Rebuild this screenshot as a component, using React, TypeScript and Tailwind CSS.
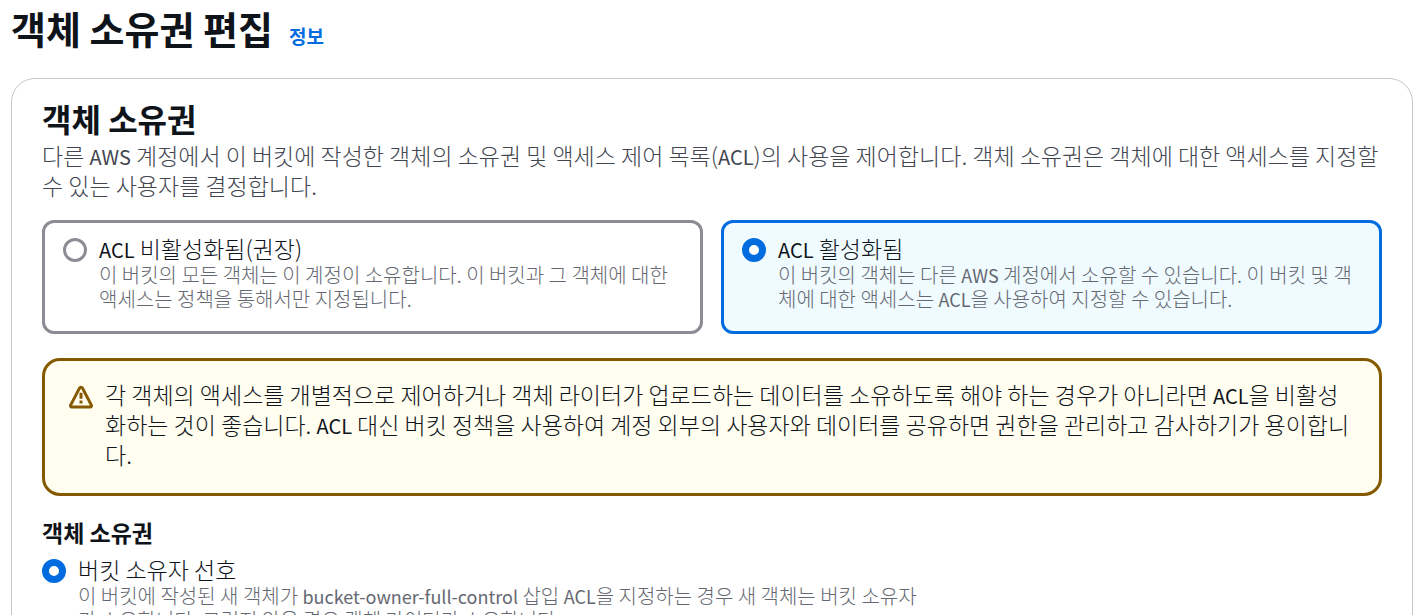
import React, { useState } from 'react';

const RADIO_CLASS =
  'mt-[5px] h-6 w-6 shrink-0 appearance-none rounded-full border-3 border-[#8c8c94] bg-white checked:border-[7px] checked:border-[#006ce0]';

const aclOptions = [
  {
    value: 'disabled',
    label: 'ACL 비활성화됨(권장)',
    description:
      '이 버킷의 모든 객체는 이 계정이 소유합니다. 이 버킷과 그 객체에 대한 액세스는 정책을 통해서만 지정됩니다.',
  },
  {
    value: 'enabled',
    label: 'ACL 활성화됨',
    description:
      '이 버킷의 객체는 다른 AWS 계정에서 소유할 수 있습니다. 이 버킷 및 객체에 대한 액세스는 ACL을 사용하여 지정할 수 있습니다.',
  },
];

// Korean copy is light; Latin words inside it are regular and a little smaller.
const MixedText = ({ children, small = false }: { children: string; small?: boolean }) => (
  <>
    {children.split(/([A-Za-z-]+)/).map((part, i) =>
      i % 2 ? (
        <span key={i} className={small ? 'text-[18px] leading-none font-normal' : 'text-[20px] leading-none font-normal'}>
          {part}
        </span>
      ) : (
        part
      )
    )}
  </>
);

const WarningIcon = () => (
  <svg className="mt-1.5 h-6 w-6 shrink-0" viewBox="0 0 16 16" fill="none" stroke="#855900" strokeWidth="2">
    <path d="M8 5.2v4M8 10.4v2" />
    <path
      strokeLinejoin="round"
      d="M14.9 13.4 9 2.1a1.15 1.15 0 0 0-2 0L1.1 13.4c-.3.6.1 1.3.8 1.3h12.2c.7 0 1.1-.7.8-1.3Z"
    />
  </svg>
);

const App = () => {
  const [acl, setAcl] = useState('enabled');
  const [owner, setOwner] = useState('preferred');

  return (
    <main className="pt-px pr-[7px] pl-[11px] font-['Noto_Sans_CJK_KR',sans-serif] text-[23px] leading-[30px] text-[#0f141a]">
      <header className="mb-[23px] flex items-baseline gap-4">
        <h1 className="text-[38px] leading-[54px] font-bold">객체 소유권 편집</h1>
        <a href="#info" className="text-[19px] leading-6 font-bold text-[#006ce0]">
          정보
        </a>
      </header>

      <section className="rounded-3xl border border-[#c6c6cd] px-[30px] pt-[21px] pb-8">
        <h2 className="text-[32px] leading-9 font-bold">객체 소유권</h2>
        <p className="mt-1 font-light text-[#424650]">
          <MixedText>
            다른 AWS 계정에서 이 버킷에 작성한 객체의 소유권 및 액세스 제어 목록(ACL)의 사용을 제어합니다. 객체
            소유권은 객체에 대한 액세스를 지정할 수 있는 사용자를 결정합니다.
          </MixedText>
        </p>

        <div className="mt-5 grid grid-cols-2 gap-[18px]" role="radiogroup" aria-label="ACL">
          {aclOptions.map((option) => (
            <label
              key={option.value}
              className="flex gap-3 rounded-xl border-3 border-[#8c8c94] px-[18px] pt-2.5 pb-5 has-checked:border-[#006ce0] has-checked:bg-[#f0fbff]"
            >
              <input
                type="radio"
                name="acl"
                value={option.value}
                checked={acl === option.value}
                onChange={() => setAcl(option.value)}
                className={RADIO_CLASS}
              />
              <span className="font-light">
                <span className="block">
                  <MixedText>{option.label}</MixedText>
                </span>
                <span className="block text-[20px] leading-6 text-[#656871]">
                  <MixedText small>{option.description}</MixedText>
                </span>
              </span>
            </label>
          ))}
        </div>

        <div className="mt-6 flex gap-3 rounded-[18px] border-3 border-[#855900] bg-[#fffef0] px-6 pt-[18px] pb-6">
          <WarningIcon />
          <p className="font-light">
            <MixedText>
              각 객체의 액세스를 개별적으로 제어하거나 객체 라이터가 업로드하는 데이터를 소유하도록 해야 하는 경우가
              아니라면 ACL을 비활성화하는 것이 좋습니다. ACL 대신 버킷 정책을 사용하여 계정 외부의 사용자와 데이터를
              공유하면 권한을 관리하고 감사하기가 용이합니다.
            </MixedText>
          </p>
        </div>

        <fieldset className="mt-[21px]">
          <legend className="mb-[7px] font-bold">객체 소유권</legend>
          <label className="flex max-w-[880px] gap-3">
            <input
              type="radio"
              name="owner"
              value="preferred"
              checked={owner === 'preferred'}
              onChange={() => setOwner('preferred')}
              className={RADIO_CLASS}
            />
            <span className="font-light">
              <span className="block">버킷 소유자 선호</span>
              <span className="block text-[20px] leading-6 text-[#656871]">
                <MixedText small>
                  이 버킷에 작성된 새 객체가 bucket-owner-full-control 삽입 ACL을 지정하는 경우 새 객체는 버킷
                  소유자가 소유합니다. 그렇지 않은 경우 객체 라이터가 소유합니다.
                </MixedText>
              </span>
            </span>
          </label>
        </fieldset>
      </section>
    </main>
  );
};

export default App;
